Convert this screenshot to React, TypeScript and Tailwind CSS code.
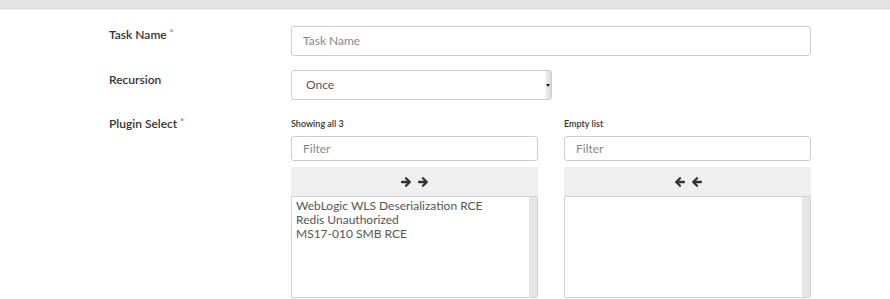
import React from "react";

const font = { fontFamily: "Lato, 'Open Sans', sans-serif" };

function Arrow({ left }: { left?: boolean }) {
  return (
    <svg width="11" height="10" viewBox="0 0 11 10" className={left ? "-scale-x-100" : ""}>
      <path
        d="M1 5H8.5M5 1.3L8.8 5L5 8.7"
        fill="none"
        stroke="#333"
        strokeWidth="2.3"
        strokeLinecap="round"
        strokeLinejoin="round"
      />
    </svg>
  );
}

function ListBox({ items }: { items: string[] }) {
  return (
    <div className="relative h-[102px] border border-[#cfd3d8] rounded-b-[2px] bg-white overflow-hidden">
      <div className="pl-[4px] pt-[2px] text-[12px] leading-[14px] text-[#555]">
        {items.map((t) => (
          <div key={t}>{t}</div>
        ))}
      </div>
      <div className="absolute right-0 top-0 bottom-0 w-[8px] bg-[#e6e6e6]" />
    </div>
  );
}

function Column({ caption, items, dir }: { caption: string; items: string[]; dir: "r" | "l" }) {
  return (
    <div className="flex flex-col">
      <div className="h-[16px] text-[9px] leading-[16px] text-[#333] font-semibold mb-[4px]">{caption}</div>
      <div className="h-[25px] border border-[#ccc] rounded-[3px] flex items-center px-[11px] text-[12px] text-[#888]">
        Filter
      </div>
      <div className="mt-[6px] h-[29px] bg-[#efefef] flex items-center justify-center gap-[6px]">
        <Arrow left={dir === "l"} />
        <Arrow left={dir === "l"} />
      </div>
      <ListBox items={items} />
    </div>
  );
}

export default function App() {
  return (
    <div className="w-[890px] h-[299px] bg-white overflow-hidden" style={font}>
      <div className="h-[9px] bg-[#e3e3e3] border-b border-[#d8d8d8]" />
      <div className="h-[1px] bg-[#f3f3f3]" />
      <div className="pl-[109px] pt-[16px]">
        <div className="grid grid-cols-[182px_520px] gap-y-[14px]">
          <div className="text-[12px] font-semibold text-[#333] pt-[0px]">
            Task Name <span className="text-[#d9534f] text-[9px] align-top">*</span>
          </div>
          <div className="h-[30px] border border-[#ccc] rounded-[3px] flex items-center px-[11px] text-[12px] text-[#888]">
            Task Name
          </div>

          <div className="text-[12px] font-semibold text-[#333] pt-[1px]">Recursion</div>
          <div className="w-[261px] h-[30px] border border-[#ccc] rounded-[3px] flex items-center relative overflow-hidden">
            <span className="pl-[14px] text-[12px] text-[#555]">Once</span>
            <div className="absolute right-0 top-0 bottom-0 w-[6px] bg-gradient-to-r from-[#f4f4f4] to-[#d8d8d8] flex items-center justify-center">
              <div className="w-0 h-0 border-l-[2px] border-r-[2px] border-t-[3px] border-l-transparent border-r-transparent border-t-[#222]" />
            </div>
          </div>

          <div className="text-[12px] font-semibold text-[#333] pt-[1px]">
            Plugin Select <span className="text-[#d9534f] text-[9px] align-top">*</span>
          </div>
          <div className="grid grid-cols-[247px_247px] gap-x-[26px] mt-[2px]">
            <Column
              caption="Showing all 3"
              dir="r"
              items={["WebLogic WLS Deserialization RCE", "Redis Unauthorized", "MS17-010 SMB RCE"]}
            />
            <Column caption="Empty list" dir="l" items={[]} />
          </div>
        </div>
      </div>
    </div>
  );
}
